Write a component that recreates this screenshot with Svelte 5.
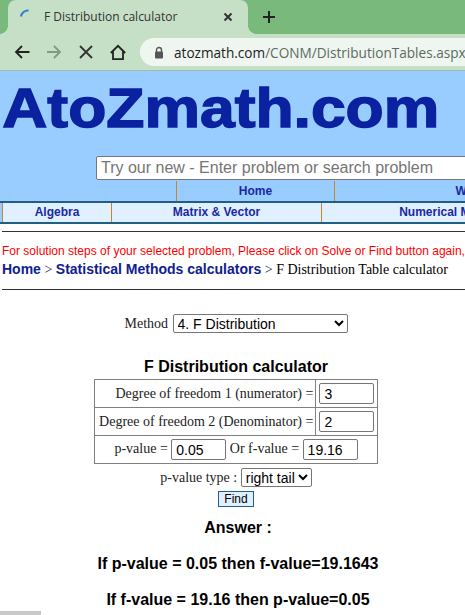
<script>
let { method = "4. F Distribution", tail = "right tail" } = $props();
</script>

<div class="window">
    <div class="tabstrip">
        <div class="tab">
            <svg class="spinner" width="16" height="16" viewBox="0 0 16 16">
                <path d="M2 8.5 A7 7 0 0 1 9.5 2.5" fill="none" stroke="#2a7fd0" stroke-width="2" />
            </svg>
            <span class="tabtitle">F Distribution calculator</span>
            <svg class="tabclose" width="10" height="10" viewBox="0 0 10 10">
                <path d="M1.5 1.5 L8.5 8.5 M8.5 1.5 L1.5 8.5" stroke="#333" stroke-width="2" />
            </svg>
        </div>
        <svg class="newtab" width="14" height="14" viewBox="0 0 14 14">
            <path d="M7 1 V13 M1 7 H13" stroke="#222" stroke-width="2" />
        </svg>
    </div>

    <div class="toolbar">
        <svg class="tool back" width="16" height="16" viewBox="0 0 16 16">
            <path d="M15.5 8 H2 M8 2 L2 8 L8 14" fill="none" stroke="#222" stroke-width="1.8" />
        </svg>
        <svg class="tool forward" width="16" height="16" viewBox="0 0 16 16">
            <path d="M1 8 H14 M8 2 L14 8 L8 14" fill="none" stroke="#7f9a85" stroke-width="1.8" />
        </svg>
        <svg class="tool stop" width="14" height="14" viewBox="0 0 14 14">
            <path d="M1 1 L13 13 M13 1 L1 13" fill="none" stroke="#333" stroke-width="1.8" />
        </svg>
        <svg class="tool homeicon" width="16" height="17" viewBox="0 0 16 17">
            <path d="M0.8 9 L8 1.8 L15.2 9 M3 7 V15.2 H13 V7" fill="none" stroke="#222" stroke-width="1.8" />
        </svg>
        <div class="omnibox">
            <svg class="lock" width="10" height="13" viewBox="0 0 10 13">
                <path d="M2.5 6 V4 a2.5 2.5 0 0 1 5 0 V6" fill="none" stroke="#555" stroke-width="1.4" />
                <rect x="1" y="5.5" width="8" height="7" rx="1" fill="#555" />
            </svg>
            <span class="url"><span class="host">atozmath.com</span>/CONM/DistributionTables.aspx?q</span>
        </div>
    </div>

    <div class="page">
        <header class="banner">
            <div class="logo">AtoZmath.com</div>
            <input class="search" placeholder="Try our new - Enter problem or search problem" />
            <nav class="menu top">
                <span class="cell first"></span>
                <span class="cell home">Home</span>
                <span class="cell rest">Worksheets</span>
            </nav>
            <nav class="menu sub">
                <span class="cell algebra">Algebra</span>
                <span class="cell matrix">Matrix &amp; Vector</span>
                <span class="cell numerical">Numerical Methods</span>
            </nav>
        </header>

        <hr class="rule first-rule" />
        <p class="notice">For solution steps of your selected problem, Please click on Solve or Find button again, to see the steps</p>
        <p class="crumbs"><b>Home</b> &gt; <b>Statistical Methods calculators</b> &gt; <span class="current">F Distribution Table calculator</span></p>
        <hr class="rule" />

        <div class="content">
            <div class="method">
                Method
                <select class="method-select">
                    <option>{method}</option>
                </select>
            </div>

            <h2>F Distribution calculator</h2>
            <table>
                <tbody>
                    <tr>
                        <td class="right">Degree of freedom 1 (numerator) =</td>
                        <td><input class="wide" value="3" /></td>
                    </tr>
                    <tr>
                        <td class="right">Degree of freedom 2 (Denominator) =</td>
                        <td><input class="wide" value="2" /></td>
                    </tr>
                    <tr>
                        <td colspan="2" class="center">
                            p-value = <input class="short" value="0.05" /> Or f-value = <input class="short" value="19.16" />
                        </td>
                    </tr>
                </tbody>
            </table>

            <div class="tail">
                p-value type :
                <select class="tail-select">
                    <option>{tail}</option>
                </select>
            </div>
            <button class="find">Find</button>

            <div class="answer">
                <div>Answer :</div>
                <div>If p-value = 0.05 then f-value=19.1643</div>
                <div>If f-value = 19.16 then p-value=0.05</div>
            </div>
        </div>
    </div>
    <div class="scrollthumb"></div>
</div>

<style>
:global(body) {
    margin: 0;
    overflow: hidden;
}

.window {
    width: 465px;
    height: 615px;
    overflow: hidden;
    position: relative;
    background: #fff;
    font-family: "Liberation Serif", serif;
}

.tabstrip {
    height: 34px;
    background: #79b97b;
    display: flex;
    align-items: flex-end;
    padding-left: 8px;
    gap: 14px;
}

.tab {
    position: relative;
    width: 240px;
    height: 34px;
    box-sizing: border-box;
    background: #c5e0c6;
    border-radius: 8px 8px 0 0;
    display: flex;
    align-items: center;
    padding: 0 11px 0 11px;
}

/* little flares where the tab runs into the toolbar */
.tab::before,
.tab::after {
    content: "";
    position: absolute;
    bottom: 0;
    width: 8px;
    height: 8px;
}

.tab::before {
    left: -8px;
    background: radial-gradient(circle at 0 0, transparent 7.5px, #c5e0c6 8px);
}

.tab::after {
    right: -8px;
    background: radial-gradient(circle at 100% 0, transparent 7.5px, #c5e0c6 8px);
}

.spinner {
    margin-top: -3px;
}

.tabtitle {
    margin-left: 9px;
    flex: 1;
    font: 12px "Open Sans", sans-serif;
    color: #333;
    padding-bottom: 2px;
}

.tabclose {
    margin-right: 4px;
    margin-bottom: 1px;
}

.newtab {
    align-self: center;
    margin-top: -1px;
}

.toolbar {
    height: 36px;
    background: #c5e0c6;
    border-bottom: 1px solid #a3bdaa;
    display: flex;
    align-items: center;
    padding-left: 14px;
    overflow: hidden;
}

.tool {
    flex: none;
}

.back {
    margin-right: 16px;
}

.forward {
    margin-right: 17px;
}

.stop {
    margin-right: 17px;
}

.homeicon {
    margin-right: 14px;
}

.omnibox {
    flex: none;
    width: 340px;
    height: 28px;
    background: #eff6f0;
    border-radius: 14px;
    display: flex;
    align-items: center;
    padding-left: 14px;
    box-sizing: border-box;
    gap: 10px;
}

.lock {
    flex: none;
}

.url {
    font: 13.6px "Open Sans", sans-serif;
    color: #5b6b60;
    white-space: nowrap;
}

.host {
    color: #222;
}

.page {
    width: 465px;
    overflow: hidden;
}

.banner {
    background: #99ccff;
    width: 465px;
}

.logo {
    height: 85px;
    padding-left: 2px;
    font: bold 55px "Liberation Sans", sans-serif;
    line-height: 74px;
    color: #0a22a0;
    -webkit-text-stroke: 1.4px #0a22a0;
    filter: blur(0.7px);
    transform: scaleX(1.135);
    transform-origin: left;
    white-space: nowrap;
}

.search {
    display: block;
    margin-left: 96px;
    width: 500px;
    height: 24px;
    box-sizing: border-box;
    border: 1px solid #767676;
    border-radius: 2px;
    padding: 0 4px;
    font: 16px "Liberation Sans", sans-serif;
    background: #fff;
}

.search::placeholder {
    color: #757575;
    opacity: 1;
}

.menu {
    display: flex;
    width: 900px;
    font: bold 12px "Liberation Sans", sans-serif;
    color: #1a2aa0;
}

.menu .cell {
    display: block;
    text-align: center;
    flex: none;
    box-sizing: border-box;
}

.top {
    height: 20px;
    margin-top: 1px;
    line-height: 20px;
}

.top .first {
    width: 176px;
}

.top .home {
    width: 158px;
    border-left: 1px solid #c8862a;
}

.top .rest {
    width: 310px;
    border-left: 1px solid #c8862a;
}

.sub {
    height: 23px;
    line-height: 19px;
    background: #e0f0ff;
    border-top: 2px solid #1f5f87;
    border-bottom: 2px solid #1f5f87;
    box-sizing: border-box;
    padding-left: 2px;
    background-clip: padding-box;
    box-shadow: inset 2px 0 0 #99ccff;
}

.sub .algebra {
    width: 109px;
    border-left: 1px solid #c8862a;
}

.sub .matrix {
    width: 210px;
    border-left: 1px solid #c8862a;
}

.sub .numerical {
    width: 266px;
    border-left: 1px solid #c8862a;
}

.rule {
    margin: 7px 0 0 2px;
    width: 600px;
    border: none;
    border-top: 1px solid #333;
    height: 0;
}

.notice {
    margin: 11px 0 0 2px;
    font: 12px/16px "Liberation Sans", sans-serif;
    color: #f00;
    white-space: nowrap;
}

.crumbs {
    margin: 2px 0 0 2px;
    font: 14px/17px "Liberation Serif", serif;
    color: #1a1a60;
    white-space: nowrap;
}

.crumbs b {
    font-family: "Liberation Sans", sans-serif;
    color: #0f2090;
}

.current {
    color: #000;
}

.crumbs + .rule {
    margin-top: 11px;
}

.content {
    width: 472px;
}

.method {
    margin-top: 24px;
    text-align: center;
    font-size: 14px;
    line-height: 20px;
    color: #222;
}

.method-select {
    width: 175px;
    height: 19px;
    box-sizing: border-box;
    font: 14px "Liberation Sans", sans-serif;
    background: #fff;
    color: #000;
    border: 1px solid #767676;
    border-radius: 2px;
    margin-left: 1px;
    vertical-align: top;
}

h2 {
    margin: 24px 0 0;
    text-align: center;
    font: bold 16px/18px "Liberation Sans", sans-serif;
    color: #000;
}

table {
    margin: 3px auto 0;
    border-collapse: collapse;
    width: 284px;
    font-size: 14px;
    color: #222;
}

td {
    border: 1px solid #808080;
    height: 28px;
    padding: 0 2px;
    box-sizing: border-box;
    white-space: nowrap;
}

.right {
    text-align: right;
}

.center {
    text-align: center;
}

td input {
    box-sizing: border-box;
    height: 21px;
    border: 1px solid #767676;
    border-radius: 2px;
    padding: 0 4px;
    font: 14px "Liberation Sans", sans-serif;
    vertical-align: middle;
}

.wide {
    width: 55px;
    margin-left: 1px;
}

.short {
    width: 55px;
}

.tail {
    margin-top: 4px;
    text-align: center;
    font-size: 14px;
    line-height: 19px;
    color: #222;
}

.tail-select {
    width: 71px;
    height: 19px;
    box-sizing: border-box;
    font: 14px "Liberation Sans", sans-serif;
    background: #fff;
    color: #000;
    border: 1px solid #767676;
    border-radius: 2px;
    vertical-align: top;
}

.find {
    display: block;
    margin: 4px auto 0;
    width: 36px;
    height: 16px;
    box-sizing: border-box;
    padding: 0;
    background: #e0f0ff;
    border: 1px solid #1f5f87;
    font: 12px/14px "Liberation Sans", sans-serif;
    color: #000;
}

.answer {
    margin-top: 12px;
    padding-left: 4px;
    display: flex;
    flex-direction: column;
    gap: 18px;
    text-align: center;
    font: bold 16px/18px "Liberation Sans", sans-serif;
    color: #000;
}

.scrollthumb {
    position: absolute;
    left: 0;
    bottom: 0;
    width: 41px;
    height: 4px;
    background: #c8c8c8;
}
</style>
